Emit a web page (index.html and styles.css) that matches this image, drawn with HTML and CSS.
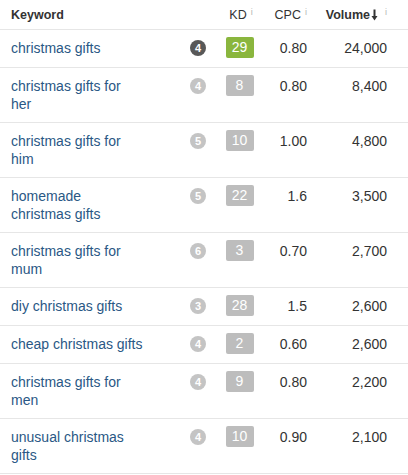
FILE: index.html
```html
<!DOCTYPE html>
<html>
<head>
<meta charset="utf-8">
<link rel="stylesheet" href="styles.css">
</head>
<body>
<div class="table">
  <div class="row head">
    <div class="kw">Keyword</div>
    <div class="diff"></div>
    <div class="kd">KD<span class="info">i</span></div>
    <div class="cpc">CPC<span class="info">i</span></div>
    <div class="vol sorted">Volume<svg class="arrow" width="7" height="12" viewBox="0 0 7 12"><path d="M3.5 0.5V9" stroke="#333" stroke-width="2"/><path d="M0.5 7L3.5 11.5L6.5 7Z" fill="#333"/></svg><span class="info wide">i</span></div>
  </div>
  <div class="row">
    <div class="kw"><a>christmas gifts</a></div>
    <div class="diff"><span class="dot dark">4</span></div>
    <div class="kd"><span class="box green">29</span></div>
    <div class="cpc">0.80</div>
    <div class="vol">24,000</div>
  </div>
  <div class="row">
    <div class="kw"><a>christmas gifts for her</a></div>
    <div class="diff"><span class="dot">4</span></div>
    <div class="kd"><span class="box">8</span></div>
    <div class="cpc">0.80</div>
    <div class="vol">8,400</div>
  </div>
  <div class="row">
    <div class="kw"><a>christmas gifts for him</a></div>
    <div class="diff"><span class="dot">5</span></div>
    <div class="kd"><span class="box">10</span></div>
    <div class="cpc">1.00</div>
    <div class="vol">4,800</div>
  </div>
  <div class="row">
    <div class="kw"><a>homemade christmas gifts</a></div>
    <div class="diff"><span class="dot">5</span></div>
    <div class="kd"><span class="box">22</span></div>
    <div class="cpc">1.6</div>
    <div class="vol">3,500</div>
  </div>
  <div class="row">
    <div class="kw"><a>christmas gifts for mum</a></div>
    <div class="diff"><span class="dot">6</span></div>
    <div class="kd"><span class="box">3</span></div>
    <div class="cpc">0.70</div>
    <div class="vol">2,700</div>
  </div>
  <div class="row">
    <div class="kw"><a>diy christmas gifts</a></div>
    <div class="diff"><span class="dot">3</span></div>
    <div class="kd"><span class="box">28</span></div>
    <div class="cpc">1.5</div>
    <div class="vol">2,600</div>
  </div>
  <div class="row">
    <div class="kw"><a>cheap christmas gifts</a></div>
    <div class="diff"><span class="dot">4</span></div>
    <div class="kd"><span class="box">2</span></div>
    <div class="cpc">0.60</div>
    <div class="vol">2,600</div>
  </div>
  <div class="row">
    <div class="kw"><a>christmas gifts for men</a></div>
    <div class="diff"><span class="dot">4</span></div>
    <div class="kd"><span class="box">9</span></div>
    <div class="cpc">0.80</div>
    <div class="vol">2,200</div>
  </div>
  <div class="row">
    <div class="kw"><a>unusual christmas gifts</a></div>
    <div class="diff"><span class="dot">4</span></div>
    <div class="kd"><span class="box">10</span></div>
    <div class="cpc">0.90</div>
    <div class="vol">2,100</div>
  </div>
</div>
</body>
</html>
```

FILE: styles.css
```css
html, body {
  margin: 0;
  padding: 0;
  background: #fff;
}
body {
  font-family: "Liberation Sans", Arial, sans-serif;
  font-size: 14px;
  line-height: 18px;
  color: #333;
}
.table {
  width: 408px;
}
.row {
  display: grid;
  grid-template-columns: 132px 69px 55px 40px 80px;
  padding: 9px 0 9px 11px;
  border-bottom: 1px solid #e6e6e6;
  align-items: start;
}
.row.head {
  padding-top: 6px;
  padding-bottom: 5px;
  font-size: 12.5px;
}
.row.head .kw,
.row.head .sorted {
  font-weight: bold;
}
.row.head .kd {
  padding-left: 3px;
}
.kw a {
  color: #2a5885;
  text-decoration: none;
}
.diff {
  display: flex;
  justify-content: flex-end;
  padding-right: 6px;
  padding-top: 1px;
}
.dot {
  width: 16px;
  height: 16px;
  border-radius: 50%;
  background: #c4c4c4;
  color: #fff;
  font-size: 11px;
  font-weight: bold;
  line-height: 16px;
  text-align: center;
}
.dot.dark {
  background: #585858;
}
.kd {
  display: flex;
  justify-content: center;
  align-items: flex-start;
}
.box {
  display: block;
  width: 28px;
  height: 21px;
  margin-top: -2px;
  line-height: 21px;
  text-align: center;
  border-radius: 2px;
  background: #bdbdbd;
  color: #fff;
}
.box.green {
  background: #8ab63e;
}
.cpc,
.vol {
  text-align: right;
  white-space: nowrap;
}
.info {
  font-size: 9px;
  font-weight: normal;
  color: #b5b5b5;
  margin-left: 4px;
  vertical-align: top;
  line-height: 12px;
}
.info.wide {
  margin-left: 7px;
}
.arrow {
  margin-left: 1px;
  vertical-align: -2px;
}
```
